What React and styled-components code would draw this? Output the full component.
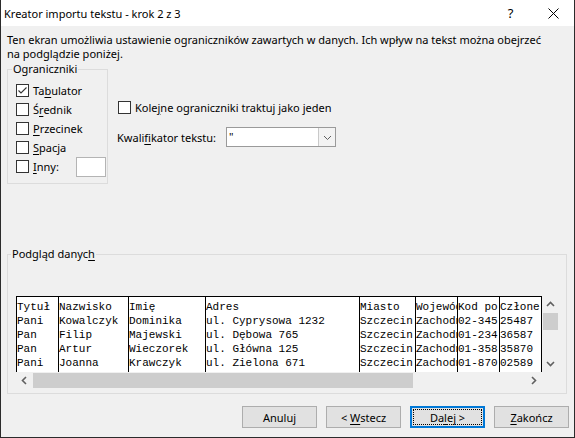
import styled, { createGlobalStyle } from "styled-components";

const GlobalStyle = createGlobalStyle`
  html, body {
    margin: 0;
    padding: 0;
    background: #ffffff;
  }
  body {
    font-family: "Noto Sans", "Liberation Sans", sans-serif;
  }
`;

const Window = styled.div`
  width: 575px;
  height: 438px;
  box-sizing: border-box;
  display: flex;
  flex-direction: column;
  border: 1px solid #2b2b2b;
  border-top: none;
  background: #f0f0f0;
  font-size: 11px;
  color: #000;
`;

const TitleBar = styled.div`
  height: 26px;
  flex: none;
  display: flex;
  align-items: center;
  background: #ffffff;
  padding-left: 3px;
`;

const Title = styled.div`
  flex: 1;
  font-size: 11px;
`;

const TitleButton = styled.div`
  width: ${(p) => p.$w}px;
  height: 26px;
  display: flex;
  align-items: center;
  justify-content: center;
  font-size: 13px;
`;

const Body = styled.div`
  flex: 1;
  display: flex;
  flex-direction: column;
  padding: 7px 5px 0 6px;
`;

const Intro = styled.p`
  margin: 0;
  line-height: 14px;
`;

const OptionsRow = styled.div`
  display: flex;
  gap: 9px;
  margin-top: 8px;
`;

const GroupBox = styled.div`
  position: relative;
  box-sizing: border-box;
  width: ${(p) => p.$w}px;
  height: ${(p) => p.$h}px;
  border: 1px solid #dcdcdc;
  padding: ${(p) => p.$pad};
`;

const Caption = styled.span`
  position: absolute;
  top: -8px;
  left: ${(p) => p.$left}px;
  padding: 0 1px;
  line-height: 14px;
  background: #f0f0f0;
`;

const CheckRow = styled.div`
  height: 19px;
  display: flex;
  align-items: center;
  gap: 4px;
  margin-left: ${(p) => p.$indent || 0}px;
`;

const Box = styled.span`
  width: 13px;
  height: 13px;
  box-sizing: border-box;
  flex: none;
  border: 1px solid #333333;
  background: #ffffff;
  display: flex;
  align-items: center;
  justify-content: center;
`;

const Key = styled.u`
  text-decoration: underline;
  text-underline-offset: 2px;
`;

const SmallInput = styled.span`
  width: 30px;
  height: 20px;
  box-sizing: border-box;
  margin-left: 13px;
  border: 1px solid #b4b4b4;
  background: #ffffff;
`;

const RightColumn = styled.div`
  display: flex;
  flex-direction: column;
  gap: 10px;
  padding-top: 29px;
`;

const FieldRow = styled.div`
  display: flex;
  align-items: center;
`;

const FieldLabel = styled.span`
  width: 109px;
`;

const Combo = styled.div`
  width: 110px;
  height: 20px;
  box-sizing: border-box;
  display: flex;
  border: 1px solid #9a9a9a;
  background: #ffffff;
`;

const ComboValue = styled.span`
  flex: 1;
  padding-left: 2px;
  line-height: 17px;
`;

const ComboButton = styled.span`
  width: 16px;
  display: flex;
  align-items: center;
  justify-content: center;
  border-left: 1px solid #c9c9c9;
  background: #f3f3f3;
`;

const PreviewSection = styled.div`
  margin-top: 70px;
`;

const PreviewGrid = styled.div`
  display: grid;
  grid-template-columns: 526px 17px;
  grid-template-rows: 76px 17px;
`;

const Table = styled.div`
  display: flex;
  box-sizing: border-box;
  background: #ffffff;
  border-top: 1px solid #000;
  border-right: 1px solid #000;
  font-family: "Liberation Mono", "Courier New", monospace;
  font-size: 11px;
  line-height: 14px;
  overflow: hidden;
`;

const Column = styled.div`
  width: ${(p) => p.$w}px;
  flex: none;
  box-sizing: border-box;
  border-left: 1px solid #000;
  padding-top: 3px;
  white-space: pre;
  overflow: hidden;
`;

const VScroll = styled.div`
  display: flex;
  flex-direction: column;
  background: #f0f0f0;
`;

const HScroll = styled.div`
  display: flex;
  background: #f0f0f0;
`;

const ArrowCell = styled.span`
  width: 17px;
  height: 17px;
  flex: none;
  display: flex;
  align-items: center;
  justify-content: center;
`;

const Thumb = styled.span`
  background: #cdcdcd;
  margin: ${(p) => (p.$vertical ? "0 1px" : "1px 0")};
  width: ${(p) => (p.$vertical ? "auto" : `${p.$len}px`)};
  height: ${(p) => (p.$vertical ? `${p.$len}px` : "auto")};
`;

const Track = styled.span`
  flex: 1;
`;

const Footer = styled.div`
  margin-top: auto;
  padding-bottom: 9px;
  display: flex;
  justify-content: flex-end;
  gap: 9px;
`;

const Button = styled.div`
  position: relative;
  width: 75px;
  height: 22px;
  box-sizing: border-box;
  display: flex;
  align-items: center;
  justify-content: center;
  background: #e1e1e1;
  border: ${(p) => (p.$default ? "2px solid #0078d7" : "1px solid #adadad")};

  ${(p) =>
    p.$default &&
    `
    &::after {
      content: "";
      position: absolute;
      inset: 1px;
      border: 1px dotted #000;
    }
  `}
`;

const columns = [
  { w: 42, cells: ["Tytuł", "Pani", "Pan", "Pan", "Pani"] },
  { w: 70, cells: ["Nazwisko", "Kowalczyk", "Filip", "Artur", "Joanna"] },
  { w: 77, cells: ["Imię", "Dominika", "Majewski", "Wieczorek", "Krawczyk"] },
  { w: 154, cells: ["Adres", "ul. Cyprysowa 1232", "ul. Dębowa 765", "ul. Główna 125", "ul. Zielona 671"] },
  { w: 56, cells: ["Miasto", "Szczecin", "Szczecin", "Szczecin", "Szczecin"] },
  { w: 42, cells: ["Województwo", "Zachodniopomorskie", "Zachodniopomorskie", "Zachodniopomorskie", "Zachodniopomorskie"] },
  { w: 42, cells: ["Kod po", "02-345", "01-234", "01-358", "01-870"] },
  { w: 41, cells: ["Człone", "25487", "36587", "35870", "02589"] },
];

function CheckBox({ checked }) {
  return (
    <Box>
      {checked && (
        <svg width="11" height="11" viewBox="0 0 11 11">
          <polyline points="1.5,5.5 4,8 9.5,2.5" fill="none" stroke="#333" strokeWidth="1.1" />
        </svg>
      )}
    </Box>
  );
}

function Chevron({ dir, color = "#606060", width = 1.6 }) {
  const pts = {
    up: "1,6 4.5,2.5 8,6",
    down: "1,3 4.5,6.5 8,3",
    left: "6,1 2.5,4.5 6,8",
    right: "3,1 6.5,4.5 3,8",
  };
  return (
    <svg width="9" height="9" viewBox="0 0 9 9">
      <polyline points={pts[dir]} fill="none" stroke={color} strokeWidth={width} />
    </svg>
  );
}

export default function App() {
  return (
    <>
      <GlobalStyle />
      <Window>
        <TitleBar>
          <Title>Kreator importu tekstu - krok 2 z 3</Title>
          <TitleButton $w={45}>?</TitleButton>
          <TitleButton $w={41}>
            <svg width="11" height="11" viewBox="0 0 11 11">
              <path d="M0.5 0.5 L10.5 10.5 M10.5 0.5 L0.5 10.5" stroke="#000" strokeWidth="1" />
            </svg>
          </TitleButton>
        </TitleBar>

        <Body>
          <Intro>
            Ten ekran umożliwia ustawienie ograniczników zawartych w danych. Ich wpływ na tekst można obejrzeć
            <br />
            na podglądzie poniżej.
          </Intro>

          <OptionsRow>
            <GroupBox $w={101} $h={115} $pad="11px 0 0 8px">
              <Caption $left={4}>Ograniczniki</Caption>
              <CheckRow>
                <CheckBox checked />
                <span>
                  Ta<Key>b</Key>ulator
                </span>
              </CheckRow>
              <CheckRow>
                <CheckBox />
                <span>
                  Ś<Key>r</Key>ednik
                </span>
              </CheckRow>
              <CheckRow>
                <CheckBox />
                <span>
                  <Key>P</Key>rzecinek
                </span>
              </CheckRow>
              <CheckRow>
                <CheckBox />
                <span>
                  <Key>S</Key>pacja
                </span>
              </CheckRow>
              <CheckRow>
                <CheckBox />
                <span>
                  <Key>I</Key>nny:
                </span>
                <SmallInput />
              </CheckRow>
            </GroupBox>

            <RightColumn>
              <CheckRow $indent={1}>
                <CheckBox />
                <span>
                  Kole<Key>j</Key>ne ograniczniki traktuj jako jeden
                </span>
              </CheckRow>
              <FieldRow>
                <FieldLabel>
                  Kwali<Key>f</Key>ikator tekstu:
                </FieldLabel>
                <Combo>
                  <ComboValue>"</ComboValue>
                  <ComboButton>
                    <Chevron dir="down" width={1} />
                  </ComboButton>
                </Combo>
              </FieldRow>
            </RightColumn>
          </OptionsRow>

          <PreviewSection>
            <GroupBox $w={560} $h={140} $pad="41px 0 0 8px">
              <Caption $left={3}>
                Podgląd danyc<Key>h</Key>
              </Caption>
              <PreviewGrid>
                <Table>
                  {columns.map((col, i) => (
                    <Column key={i} $w={col.w}>
                      {col.cells.join("\n")}
                    </Column>
                  ))}
                </Table>
                <VScroll>
                  <ArrowCell>
                    <Chevron dir="up" />
                  </ArrowCell>
                  <Thumb $vertical $len={17} />
                  <Track />
                  <ArrowCell>
                    <Chevron dir="down" />
                  </ArrowCell>
                </VScroll>
                <HScroll>
                  <ArrowCell>
                    <Chevron dir="left" />
                  </ArrowCell>
                  <Thumb $len={380} />
                  <Track />
                  <ArrowCell>
                    <Chevron dir="right" />
                  </ArrowCell>
                </HScroll>
              </PreviewGrid>
            </GroupBox>
          </PreviewSection>

          <Footer>
            <Button>Anuluj</Button>
            <Button>
              <span>
                &lt; <Key>W</Key>stecz
              </span>
            </Button>
            <Button $default>
              <span>
                Da<Key>l</Key>ej &gt;
              </span>
            </Button>
            <Button>
              <span>
                <Key>Z</Key>akończ
              </span>
            </Button>
          </Footer>
        </Body>
      </Window>
    </>
  );
}
